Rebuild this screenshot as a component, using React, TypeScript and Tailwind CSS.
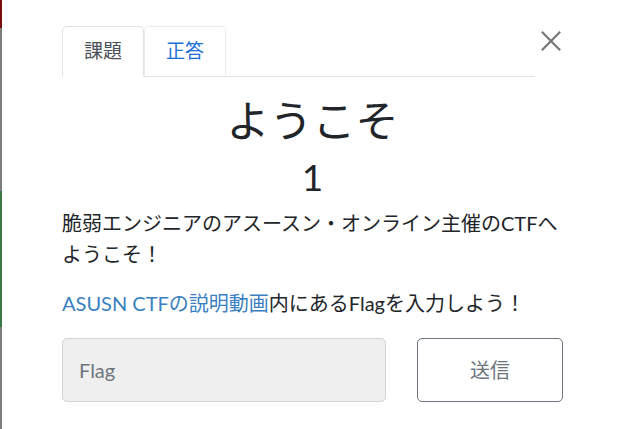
const FONT = "font-['Lato','Noto_Sans_CJK_JP',sans-serif]";

export default function App() {
  return (
    <div className={`relative h-[429px] w-[619px] overflow-hidden bg-white text-[#212529] ${FONT}`}>
      {/* left edge strip from the page behind */}
      <div className="absolute left-0 top-0 flex h-full w-[2px] flex-col">
        <div className="h-[28px] bg-[#7a0d0d]" />
        <div className="h-[163px] bg-[#7d7d7d]" />
        <div className="h-[136px] bg-[#3c7a45]" />
        <div className="flex-1 bg-[#7d7d7d]" />
      </div>

      <div className="flex w-[563px] flex-col pl-[62px] pt-[26px]">
        {/* Tabs + close */}
        <div className="flex items-start">
          <div className="mr-[4px] flex flex-1 border-b border-[#dee2e6]">
            <div className="-mb-px flex h-[51px] w-[82px] items-center justify-center rounded-t-[5px] border border-[#dee2e6] border-b-white bg-white text-[19px] text-[#495057]">
              課題
            </div>
            <div className="flex h-[50px] w-[82px] items-center justify-center rounded-t-[5px] border border-[#e9ecef] border-b-0 text-[19px] text-[#1a6fd8]">
              正答
            </div>
          </div>
          <button className="mt-[2px] flex h-[26px] w-[24px] items-center justify-center text-[#777]">
            <svg width="22" height="22" viewBox="0 0 24 24" stroke="currentColor" strokeWidth="2.4" fill="none">
              <path d="M2 2 L22 22 M22 2 L2 22" />
            </svg>
          </button>
        </div>

        {/* Title */}
        <h1 className="mt-[15px] text-center text-[43px] leading-[58px] font-normal">ようこそ</h1>
        <p className="mt-[5px] text-center text-[37px] leading-[44px]">1</p>

        {/* Body */}
        <p className="mt-[9px] text-[20px] leading-[31px]">
          脆弱エンジニアのアスースン・オンライン主催のCTFへようこそ！
        </p>
        <p className="mt-[18px] text-[20px] leading-[31px]">
          <a className="text-[#3a7fc1]">ASUSN CTFの説明動画</a>内にあるFlagを入力しよう！
        </p>

        {/* Form */}
        <div className="mt-[19px] flex items-center gap-[31px]">
          <input
            placeholder="Flag"
            className={`h-[64px] w-[324px] shrink-0 rounded-[5px] border border-[#ced4da] bg-[#efefef] px-[16px] text-[20px] placeholder:text-[#6c757d] ${FONT}`}
          />
          <button className="h-[64px] w-[146px] shrink-0 rounded-[5px] border border-[#6c757d] text-[20px] text-[#6c757d]">
            送信
          </button>
        </div>
      </div>
    </div>
  );
}
